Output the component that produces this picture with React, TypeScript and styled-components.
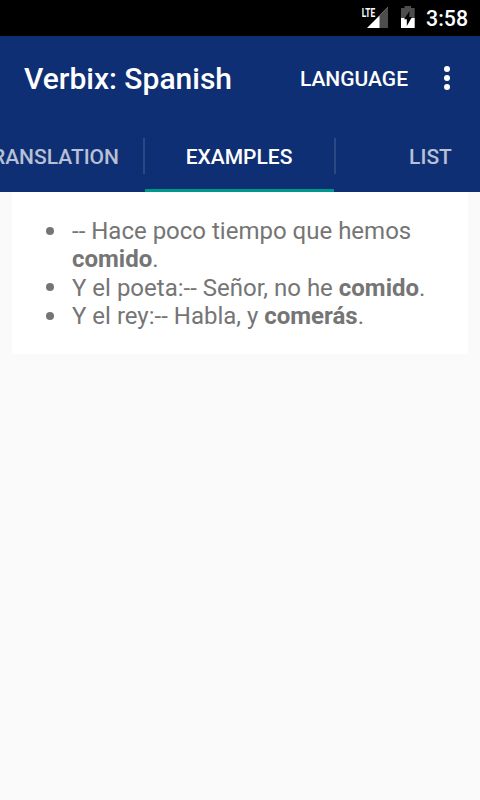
import React from "react";
import styled, { createGlobalStyle } from "styled-components";

const Global = createGlobalStyle`
  *{box-sizing:border-box}
  html,body{margin:0;background:#fafafa;font-family:Roboto,"Noto Sans",sans-serif;overflow:hidden}
`;
const Screen = styled.main`width:480px;height:800px;display:flex;flex-direction:column;background:#fafafa;overflow:hidden;`;
const StatusBar = styled.header`height:36px;flex:none;background:#000;color:#fff;display:flex;justify-content:flex-end;padding-right:12px;`;
const StatusIcons = styled.svg`width:56px;height:36px;flex:none;margin-right:10px;`;
const Network = styled.text`font:700 13.5px Roboto,sans-serif;`;
const Clock = styled.time`font-size:21.3px;font-weight:500;line-height:38px;white-space:nowrap;`;
const Toolbar = styled.div`height:84px;flex:none;background:#0f2f74;color:#fff;display:flex;align-items:center;padding:2px 0 0 24px;`;
const Title = styled.h1`margin:0;font-size:30px;font-weight:500;line-height:36px;flex:1;white-space:nowrap;`;
const Action = styled.button`border:0;padding:0;background:none;color:#fff;font:500 21px/28px Roboto,sans-serif;white-space:nowrap;`;
const Overflow = styled.button`width:72px;height:72px;padding:0 0 2px 6px;border:0;background:none;display:grid;place-items:center;`;
const Tabs = styled.nav`height:72px;flex:none;background:#0f2f74;display:flex;`;
const Tab = styled.div<{ $width: number; $active?: boolean; $align?: "end" }>`
  width:${p => p.$width}px;flex:none;height:72px;display:flex;align-items:center;justify-content:${p => p.$align ?? "center"};
  color:${p => p.$active ? "#fff" : "#b7c0d5"};font-size:21px;font-weight:500;white-space:nowrap;padding:${p => p.$align ? "2px 24px 0 0" : p.$active ? "2px 1px 0 0" : "2px 0 0"};
  box-shadow:${p => p.$active ? "inset 0 -3px #009688" : "none"};
`;
const Divider = styled.i`width:2px;height:36px;flex:none;margin-top:18px;background:#2c4882;`;
const Card = styled.section`margin:0 12px;height:162px;background:#fff;padding-top:25px;`;
const Examples = styled.ul`margin:0;padding:0 0 0 60px;font-size:24px;line-height:28.4px;color:#757575;list-style:none;`;
const Example = styled.li`
  position:relative;white-space:nowrap;
  &::before{content:"";position:absolute;left:-26px;top:9.6px;width:8px;height:8px;border-radius:50%;background:#757575;}
`;

export default function App() {
  return <Screen>
    <Global />
    <StatusBar>
      <StatusIcons viewBox="360 0 56 36">
        <path d="M367 28L388 7v21z" fill="#fff"/>
        <path d="M379.5 15.5L388 7v21h-8.5z" fill="#4d4d4d"/>
        <Network x="361.8" y="17" textLength="13.4" lengthAdjust="spacingAndGlyphs" fill="#fff">LTE</Network>
        <path d="M401 8h3.5V6h6.5v2h3.7v10H401z" fill="#4d4d4d"/>
        <path d="M401 18h13.7v10H401z" fill="#fff"/>
        <path d="M409.5 11L404 19.2h2.8V26l5.2-9h-2.8z" fill="#000"/>
      </StatusIcons>
      <Clock>3:58</Clock>
    </StatusBar>
    <Toolbar>
      <Title>Verbix: Spanish</Title>
      <Action>LANGUAGE</Action>
      <Overflow aria-label="More"><svg width="8" height="24" fill="#fff"><circle cx="4" cy="3" r="3"/><circle cx="4" cy="12" r="3"/><circle cx="4" cy="21" r="3"/></svg></Overflow>
    </Toolbar>
    <Tabs>
      <Tab $width={143} $align="end">TRANSLATION</Tab><Divider /><Tab $width={189} $active>EXAMPLES</Tab><Divider /><Tab $width={189}>LIST</Tab>
    </Tabs>
    <Card><Examples>
      <Example>-- Hace poco tiempo que hemos<br /><b>comido</b>.</Example>
      <Example>Y el poeta:-- Señor, no he <b>comido</b>.</Example>
      <Example>Y el rey:-- Habla, y <b>comerás</b>.</Example>
    </Examples></Card>
  </Screen>;
}
